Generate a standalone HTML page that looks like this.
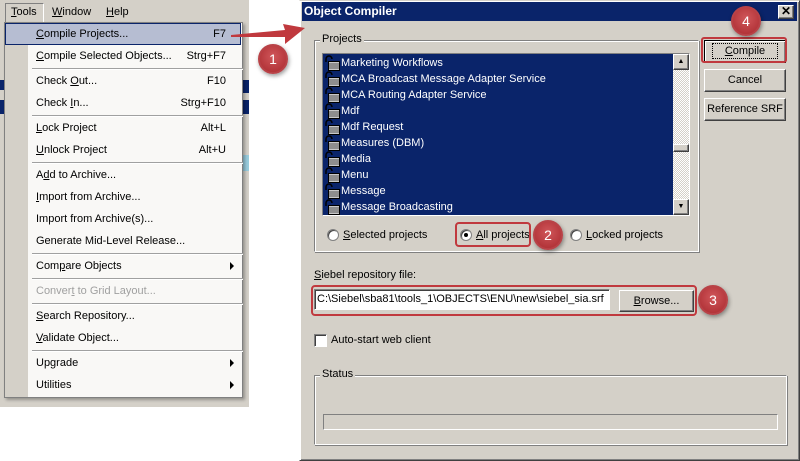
<!DOCTYPE html>
<html><head><meta charset="utf-8"><style>
*{margin:0;padding:0;box-sizing:border-box}
body{width:800px;height:461px;position:relative;background:#fff;font-family:"Liberation Sans",Tahoma,sans-serif;font-size:11px;color:#000;overflow:hidden}
.a{position:absolute}
.mi{position:absolute;left:36px;width:190px;height:20px;line-height:20px;font-size:11px}
.mi .k{position:absolute;right:0;top:0}
.sep{position:absolute;left:32px;width:211px;height:2px;border-top:1px solid #a0a0a0;border-bottom:1px solid #fff}
.arr{position:absolute;left:230px;width:0;height:0;border-top:4px solid transparent;border-bottom:4px solid transparent;border-left:4px solid #000}
.btn{position:absolute;background:#d4d0c8;border:1px solid;border-color:#fff #404040 #404040 #fff;box-shadow:inset -1px -1px 0 #808080;text-align:center;font-size:11px}
.li{position:absolute;left:0;height:16px;line-height:16px;color:#fff;font-size:11px;padding-left:18px;width:345px}
.lk{position:absolute;left:1px;top:0;width:16px;height:16px}
.circ{position:absolute;width:30px;height:30px;border-radius:50%;background:radial-gradient(circle at 50% 40%,#d0565a,#a9292e);border:2px solid #b84247;box-shadow:1px 2px 4px rgba(0,0,0,.4);color:#fff;font-size:14px;text-align:center;line-height:26px}
.rad{position:absolute;width:12px;height:12px;border-radius:50%;background:#fff;border:1px solid #808080;box-shadow:inset 1px 1px 0 #404040}
u{text-decoration:underline}
</style></head><body>
<div class="a" style="left:0;top:0;width:249px;height:407px;background:#d4d0c8"></div>
<div class="a" style="left:0;top:80px;width:6px;height:10px;background:#0a246a"></div>
<div class="a" style="left:0;top:100px;width:6px;height:14px;background:#0a246a"></div>
<div class="a" style="left:243px;top:80px;width:6px;height:13px;background:#0a246a"></div>
<div class="a" style="left:243px;top:100px;width:6px;height:14px;background:#0a246a"></div>
<div class="a" style="left:243px;top:155px;width:6px;height:16px;background:#9cd"></div>
<div class="a" style="left:5px;top:3px;width:39px;height:20px;border:1px solid;border-color:#808080 #fff #fff #808080"></div>
<div class="a" style="left:11px;top:6px"><u>T</u>ools</div>
<div class="a" style="left:52px;top:6px"><u>W</u>indow</div>
<div class="a" style="left:106px;top:6px"><u>H</u>elp</div>
<div class="a" style="left:4px;top:22px;width:239px;height:376px;background:#f9f8f6;border:1px solid #808080;box-shadow:2px 2px 3px rgba(0,0,0,.3)"></div>
<div class="a" style="left:5px;top:23px;width:23px;height:374px;background:#d4d0c8"></div>
<div class="a" style="left:5px;top:23px;width:236px;height:22px;background:#b6bdd2;border:1px solid #0a246a"></div>
<div class="mi" style="top:24px"><u>C</u>ompile Projects...<span class="k">F7</span></div>
<div class="mi" style="top:46px"><u>C</u>ompile Selected Objects...<span class="k">Strg+F7</span></div>
<div class="sep" style="top:68px"></div>
<div class="mi" style="top:71px">Check <u>O</u>ut...<span class="k">F10</span></div>
<div class="mi" style="top:93px">Check <u>I</u>n...<span class="k">Strg+F10</span></div>
<div class="sep" style="top:115px"></div>
<div class="mi" style="top:118px"><u>L</u>ock Project<span class="k">Alt+L</span></div>
<div class="mi" style="top:140px"><u>U</u>nlock Project<span class="k">Alt+U</span></div>
<div class="sep" style="top:162px"></div>
<div class="mi" style="top:165px">A<u>d</u>d to Archive...</div>
<div class="mi" style="top:187px"><u>I</u>mport from Archive...</div>
<div class="mi" style="top:209px">Import from Archive(s)...</div>
<div class="mi" style="top:231px">Generate Mid-Level Release...</div>
<div class="sep" style="top:253px"></div>
<div class="mi" style="top:256px">Com<u>p</u>are Objects</div><div class="arr" style="top:262px"></div>
<div class="sep" style="top:278px"></div>
<div class="mi" style="top:281px;color:#a0a0a0">Conver<u>t</u> to Grid Layout...</div>
<div class="sep" style="top:303px"></div>
<div class="mi" style="top:306px"><u>S</u>earch Repository...</div>
<div class="mi" style="top:328px"><u>V</u>alidate Object...</div>
<div class="sep" style="top:350px"></div>
<div class="mi" style="top:353px">Upgrade</div><div class="arr" style="top:359px"></div>
<div class="mi" style="top:375px">Utilities</div><div class="arr" style="top:381px"></div>

<div class="a" style="left:299px;top:0;width:501px;height:461px;background:#d4d0c8;border:1px solid;border-color:#d4d0c8 #404040 #404040 #fff;box-shadow:inset 1px 1px 0 #fff,inset -1px -1px 0 #808080"></div>
<div class="a" style="left:302px;top:2px;width:495px;height:19px;background:#0a246a;color:#fff;font-weight:bold;font-size:12px;line-height:19px;padding-left:2px">Object Compiler</div>
<div class="btn" style="left:778px;top:5px;width:16px;height:14px;line-height:11px;font-size:12px;font-weight:bold">✕</div>
<div class="a" style="left:314px;top:40px;width:385px;height:212px;border:1px solid;border-color:#808080 #fff #fff #808080;box-shadow:inset 1px 1px 0 #fff,1px 1px 0 #808080"></div>
<div class="a" style="left:320px;top:33px;background:#d4d0c8;padding:0 2px">Projects</div>
<div class="a" style="left:322px;top:53px;width:368px;height:163px;background:#0a246a;border:1px solid;border-color:#808080 #fff #fff #808080">
<div class="li" style="top:1px"><svg class="lk" viewBox="0 0 16 16"><path d="M2 7V4a3 3 0 0 1 6 0" fill="none" stroke="#000" stroke-width="1.5"/><rect x="4.5" y="6.5" width="11" height="9" fill="#c8c8c8" stroke="#000"/><path d="M5 9h10M5 11h10M5 13h10" stroke="#555"/></svg>Marketing Workflows</div>
<div class="li" style="top:17px"><svg class="lk" viewBox="0 0 16 16"><path d="M2 7V4a3 3 0 0 1 6 0" fill="none" stroke="#000" stroke-width="1.5"/><rect x="4.5" y="6.5" width="11" height="9" fill="#c8c8c8" stroke="#000"/><path d="M5 9h10M5 11h10M5 13h10" stroke="#555"/></svg>MCA Broadcast Message Adapter Service</div>
<div class="li" style="top:33px"><svg class="lk" viewBox="0 0 16 16"><path d="M2 7V4a3 3 0 0 1 6 0" fill="none" stroke="#000" stroke-width="1.5"/><rect x="4.5" y="6.5" width="11" height="9" fill="#c8c8c8" stroke="#000"/><path d="M5 9h10M5 11h10M5 13h10" stroke="#555"/></svg>MCA Routing Adapter Service</div>
<div class="li" style="top:49px"><svg class="lk" viewBox="0 0 16 16"><path d="M2 7V4a3 3 0 0 1 6 0" fill="none" stroke="#000" stroke-width="1.5"/><rect x="4.5" y="6.5" width="11" height="9" fill="#c8c8c8" stroke="#000"/><path d="M5 9h10M5 11h10M5 13h10" stroke="#555"/></svg>Mdf</div>
<div class="li" style="top:65px"><svg class="lk" viewBox="0 0 16 16"><path d="M2 7V4a3 3 0 0 1 6 0" fill="none" stroke="#000" stroke-width="1.5"/><rect x="4.5" y="6.5" width="11" height="9" fill="#c8c8c8" stroke="#000"/><path d="M5 9h10M5 11h10M5 13h10" stroke="#555"/></svg>Mdf Request</div>
<div class="li" style="top:81px"><svg class="lk" viewBox="0 0 16 16"><path d="M2 7V4a3 3 0 0 1 6 0" fill="none" stroke="#000" stroke-width="1.5"/><rect x="4.5" y="6.5" width="11" height="9" fill="#c8c8c8" stroke="#000"/><path d="M5 9h10M5 11h10M5 13h10" stroke="#555"/></svg>Measures (DBM)</div>
<div class="li" style="top:97px"><svg class="lk" viewBox="0 0 16 16"><path d="M2 7V4a3 3 0 0 1 6 0" fill="none" stroke="#000" stroke-width="1.5"/><rect x="4.5" y="6.5" width="11" height="9" fill="#c8c8c8" stroke="#000"/><path d="M5 9h10M5 11h10M5 13h10" stroke="#555"/></svg>Media</div>
<div class="li" style="top:113px"><svg class="lk" viewBox="0 0 16 16"><path d="M2 7V4a3 3 0 0 1 6 0" fill="none" stroke="#000" stroke-width="1.5"/><rect x="4.5" y="6.5" width="11" height="9" fill="#c8c8c8" stroke="#000"/><path d="M5 9h10M5 11h10M5 13h10" stroke="#555"/></svg>Menu</div>
<div class="li" style="top:129px"><svg class="lk" viewBox="0 0 16 16"><path d="M2 7V4a3 3 0 0 1 6 0" fill="none" stroke="#000" stroke-width="1.5"/><rect x="4.5" y="6.5" width="11" height="9" fill="#c8c8c8" stroke="#000"/><path d="M5 9h10M5 11h10M5 13h10" stroke="#555"/></svg>Message</div>
<div class="li" style="top:145px"><svg class="lk" viewBox="0 0 16 16"><path d="M2 7V4a3 3 0 0 1 6 0" fill="none" stroke="#000" stroke-width="1.5"/><rect x="4.5" y="6.5" width="11" height="9" fill="#c8c8c8" stroke="#000"/><path d="M5 9h10M5 11h10M5 13h10" stroke="#555"/></svg>Message Broadcasting</div>
<div class="a" style="left:350px;top:0;width:16px;height:161px;background:repeating-conic-gradient(#fff 0 25%,#d4d0c8 0 50%) 0 0/2px 2px"></div>
<div class="btn" style="left:350px;top:0;width:16px;height:16px;font-size:7px;line-height:14px">▲</div>
<div class="btn" style="left:350px;top:90px;width:16px;height:8px"></div>
<div class="btn" style="left:350px;top:145px;width:16px;height:16px;font-size:7px;line-height:14px">▼</div>
</div>
<div class="rad" style="left:327px;top:229px"></div><div class="a" style="left:343px;top:229px"><u>S</u>elected projects</div>
<div class="rad" style="left:460px;top:229px"><div class="a" style="left:3px;top:3px;width:4px;height:4px;background:#000;border-radius:50%"></div></div><div class="a" style="left:476px;top:229px"><u>A</u>ll projects</div>
<div class="a" style="left:455px;top:222px;width:76px;height:25px;border:2px solid #c0393e;border-radius:4px"></div>
<div class="rad" style="left:570px;top:229px"></div><div class="a" style="left:586px;top:229px"><u>L</u>ocked projects</div>
<div class="btn" style="left:704px;top:40px;width:82px;height:23px;line-height:20px;border-color:#000;box-shadow:inset 1px 1px 0 #fff,inset -1px -1px 0 #808080"><span style="outline:1px dotted #000;padding:1px 12px"><u>C</u>ompile</span></div>
<div class="a" style="left:701px;top:37px;width:86px;height:26px;border:2px solid #c0393e;border-radius:3px"></div>
<div class="btn" style="left:704px;top:69px;width:82px;height:23px;line-height:21px">Cancel</div>
<div class="btn" style="left:704px;top:98px;width:82px;height:23px;line-height:21px">Reference SRF</div>
<div class="a" style="left:314px;top:269px"><u>S</u>iebel repository file:</div>
<div class="a" style="left:314px;top:289px;width:296px;height:21px;background:#fff;border:1px solid;border-color:#808080 #fff #fff #808080;box-shadow:inset 1px 1px 0 #404040;line-height:19px;padding-left:2px;white-space:nowrap;overflow:hidden">C:\Siebel\sba81\tools_1\OBJECTS\ENU\new\siebel_sia.srf</div>
<div class="btn" style="left:619px;top:290px;width:75px;height:22px;line-height:20px"><u>B</u>rowse...</div>
<div class="a" style="left:311px;top:285px;width:386px;height:31px;border:2px solid #c0393e;border-radius:4px"></div>
<div class="a" style="left:314px;top:334px;width:13px;height:13px;background:#fff;border:1px solid;border-color:#808080 #fff #fff #808080;box-shadow:inset 1px 1px 0 #404040"></div>
<div class="a" style="left:331px;top:334px">Auto-start web client</div>
<div class="a" style="left:314px;top:375px;width:473px;height:70px;border:1px solid;border-color:#808080 #fff #fff #808080;box-shadow:inset 1px 1px 0 #fff,1px 1px 0 #808080"></div>
<div class="a" style="left:320px;top:368px;background:#d4d0c8;padding:0 2px">Status</div>
<div class="a" style="left:323px;top:414px;width:455px;height:16px;border:1px solid;border-color:#808080 #fff #fff #808080"></div>
<svg class="a" style="left:225px;top:18px" width="85" height="30"><polygon points="6,17 60,12 58,6 80,10 60,26 60,19 6,19" fill="#c0393e"/></svg>
<div class="circ" style="left:258px;top:44px">1</div>
<div class="circ" style="left:533px;top:220px">2</div>
<div class="circ" style="left:698px;top:285px">3</div>
<div class="circ" style="left:731px;top:6px">4</div>
</body></html>
